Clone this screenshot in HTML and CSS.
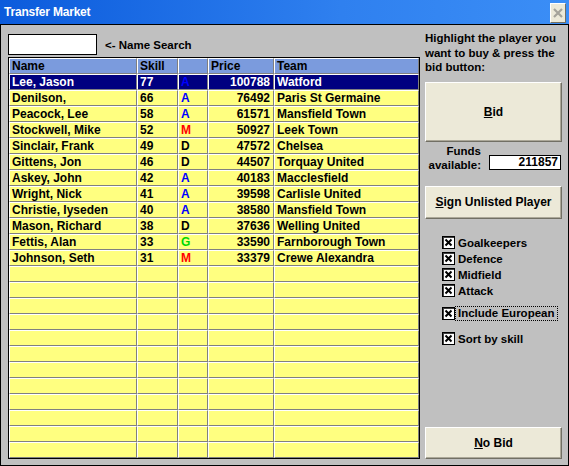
FILE: index.html
```html
<!DOCTYPE html>
<html>
<head>
<meta charset="utf-8">
<link rel="stylesheet" href="styles.css">
</head>
<body>
<div class="window">
  <div class="titlebar">
    <span class="title">Transfer Market</span>
    <span class="close"><svg width="10" height="10" viewBox="0 0 10 10"><path d="M1 1L9 9M9 1L1 9" stroke="#a5a39a" stroke-width="2.2"/></svg></span>
  </div>
  <div class="content">
    <div class="left">
      <div class="search-row">
        <div class="search-box"></div>
        <span class="search-label">&lt;- Name Search</span>
      </div>
      <div class="grid">
        <div class="row head"><div class="c">Name</div><div class="c">Skill</div><div class="c"></div><div class="c">Price</div><div class="c">Team</div></div>
        <div class="row sel"><div class="c">Lee, Jason</div><div class="c">77</div><div class="c pa">A</div><div class="c num">100788</div><div class="c">Watford</div></div>
        <div class="row"><div class="c">Denilson,</div><div class="c">66</div><div class="c pa">A</div><div class="c num">76492</div><div class="c">Paris St Germaine</div></div>
        <div class="row"><div class="c">Peacock, Lee</div><div class="c">58</div><div class="c pa">A</div><div class="c num">61571</div><div class="c">Mansfield Town</div></div>
        <div class="row"><div class="c">Stockwell, Mike</div><div class="c">52</div><div class="c pm">M</div><div class="c num">50927</div><div class="c">Leek Town</div></div>
        <div class="row"><div class="c">Sinclair, Frank</div><div class="c">49</div><div class="c pd">D</div><div class="c num">47572</div><div class="c">Chelsea</div></div>
        <div class="row"><div class="c">Gittens, Jon</div><div class="c">46</div><div class="c pd">D</div><div class="c num">44507</div><div class="c">Torquay United</div></div>
        <div class="row"><div class="c">Askey, John</div><div class="c">42</div><div class="c pa">A</div><div class="c num">40183</div><div class="c">Macclesfield</div></div>
        <div class="row"><div class="c">Wright, Nick</div><div class="c">41</div><div class="c pa">A</div><div class="c num">39598</div><div class="c">Carlisle United</div></div>
        <div class="row"><div class="c">Christie, Iyseden</div><div class="c">40</div><div class="c pa">A</div><div class="c num">38580</div><div class="c">Mansfield Town</div></div>
        <div class="row"><div class="c">Mason, Richard</div><div class="c">38</div><div class="c pd">D</div><div class="c num">37636</div><div class="c">Welling United</div></div>
        <div class="row"><div class="c">Fettis, Alan</div><div class="c">33</div><div class="c pg">G</div><div class="c num">33590</div><div class="c">Farnborough Town</div></div>
        <div class="row"><div class="c">Johnson, Seth</div><div class="c">31</div><div class="c pm">M</div><div class="c num">33379</div><div class="c">Crewe Alexandra</div></div>
        <div class="row"><div class="c"></div><div class="c"></div><div class="c"></div><div class="c"></div><div class="c"></div></div>
        <div class="row"><div class="c"></div><div class="c"></div><div class="c"></div><div class="c"></div><div class="c"></div></div>
        <div class="row"><div class="c"></div><div class="c"></div><div class="c"></div><div class="c"></div><div class="c"></div></div>
        <div class="row"><div class="c"></div><div class="c"></div><div class="c"></div><div class="c"></div><div class="c"></div></div>
        <div class="row"><div class="c"></div><div class="c"></div><div class="c"></div><div class="c"></div><div class="c"></div></div>
        <div class="row"><div class="c"></div><div class="c"></div><div class="c"></div><div class="c"></div><div class="c"></div></div>
        <div class="row"><div class="c"></div><div class="c"></div><div class="c"></div><div class="c"></div><div class="c"></div></div>
        <div class="row"><div class="c"></div><div class="c"></div><div class="c"></div><div class="c"></div><div class="c"></div></div>
        <div class="row"><div class="c"></div><div class="c"></div><div class="c"></div><div class="c"></div><div class="c"></div></div>
        <div class="row"><div class="c"></div><div class="c"></div><div class="c"></div><div class="c"></div><div class="c"></div></div>
        <div class="row"><div class="c"></div><div class="c"></div><div class="c"></div><div class="c"></div><div class="c"></div></div>
        <div class="row"><div class="c"></div><div class="c"></div><div class="c"></div><div class="c"></div><div class="c"></div></div>
      </div>
    </div>
    <div class="right">
      <div class="hint">Highlight the player you want to buy &amp; press the bid button:</div>
      <div class="btn bid"><span><u>B</u>id</span></div>
      <div class="funds">
        <div class="funds-label">Funds<br>available:</div>
        <div class="funds-box">211857</div>
      </div>
      <div class="btn sign"><span><u>S</u>ign Unlisted Player</span></div>
      <div class="checks">
        <div class="chk"><span class="box"><svg width="11" height="11" viewBox="0 0 11 11"><path d="M2.5 2.5L8.5 8.5M8.5 2.5L2.5 8.5" stroke="#000" stroke-width="2"/></svg></span><span>Goalkeepers</span></div>
        <div class="chk"><span class="box"><svg width="11" height="11" viewBox="0 0 11 11"><path d="M2.5 2.5L8.5 8.5M8.5 2.5L2.5 8.5" stroke="#000" stroke-width="2"/></svg></span><span>Defence</span></div>
        <div class="chk"><span class="box"><svg width="11" height="11" viewBox="0 0 11 11"><path d="M2.5 2.5L8.5 8.5M8.5 2.5L2.5 8.5" stroke="#000" stroke-width="2"/></svg></span><span>Midfield</span></div>
        <div class="chk"><span class="box"><svg width="11" height="11" viewBox="0 0 11 11"><path d="M2.5 2.5L8.5 8.5M8.5 2.5L2.5 8.5" stroke="#000" stroke-width="2"/></svg></span><span>Attack</span></div>
        <div class="chk euro"><span class="box"><svg width="11" height="11" viewBox="0 0 11 11"><path d="M2.5 2.5L8.5 8.5M8.5 2.5L2.5 8.5" stroke="#000" stroke-width="2"/></svg></span><span class="focus">Include European</span></div>
        <div class="chk sort"><span class="box"><svg width="11" height="11" viewBox="0 0 11 11"><path d="M2.5 2.5L8.5 8.5M8.5 2.5L2.5 8.5" stroke="#000" stroke-width="2"/></svg></span><span>Sort by skill</span></div>
      </div>
      <div class="btn nobid"><span><u>N</u>o Bid</span></div>
    </div>
  </div>
</div>
</body>
</html>
```
FILE: styles.css
```css
* { box-sizing: border-box; }
html, body { margin: 0; padding: 0; }
body {
  font-family: "Liberation Sans", Arial, sans-serif;
  font-weight: bold;
  font-size: 11.5px;
  color: #000;
  background: #c0c0c0;
}
.window {
  width: 569px;
  height: 466px;
  background: #c0c0c0;
  border: 1px solid #000;
  border-top: none;
  display: flex;
  flex-direction: column;
}
.titlebar {
  height: 26px;
  margin: 0 -1px;
  background: linear-gradient(to right, #0b5bdc, #2f80ef 60%, #3b8ef6);
  border-bottom: 1px solid #000;
  display: flex;
  align-items: center;
  justify-content: space-between;
  padding: 0 3px 0 4px;
}
.title {
  color: #fff;
  font-size: 12px;
  letter-spacing: -0.2px;
}
.close {
  width: 16px;
  height: 20px;
  background: #ece9d8;
  border-top: 1px solid #fff;
  border-left: 1px solid #fff;
  border-right: 1px solid #716f64;
  border-bottom: 1px solid #716f64;
  display: flex;
  align-items: center;
  justify-content: center;
  margin-top: 1px;
}
.content {
  flex: 1;
  display: flex;
  padding: 0 5px 6px 7px;
}
.left {
  width: 412px;
  display: flex;
  flex-direction: column;
  padding-top: 9px;
}
.search-row {
  display: flex;
  align-items: center;
  height: 21px;
  gap: 8px;
}
.search-box {
  width: 89px;
  height: 21px;
  background: #fff;
  border: 1px solid #000;
}
.search-label { font-size: 11.5px; }
.grid {
  margin-top: 2px;
  border: 1px solid #000;
  background: #ffff80;
}
.row {
  display: grid;
  grid-template-columns: 128px 41px 30px 66px 145px;
  height: 16px;
}
.c {
  height: 16px;
  border-top: 1px solid #fff;
  border-left: 1px solid #fff;
  border-bottom: 1px solid #808080;
  border-right: 1px solid #808080;
  line-height: 14px;
  padding: 0 2px;
  font-size: 12px;
  white-space: nowrap;
  overflow: hidden;
  background: #ffff80;
}
.row .c:first-child { padding-left: 2px; }
.head .c { background: #7b9bdd; }
.sel .c { background: #000080; color: #fff; }
.num { text-align: right; padding-right: 3px; }
.pa { color: #0000ff; }
.sel .pa { color: #0000ff; }
.pm { color: #ff0000; }
.pd { color: #000; }
.pg { color: #00d800; }
.right {
  width: 137px;
  margin-left: 5px;
  display: flex;
  flex-direction: column;
  padding-top: 6px;
}
.hint {
  line-height: 14.5px;
}
.btn {
  background: #ece9d8;
  border-top: 1px solid #fff;
  border-left: 1px solid #fff;
  border-right: 1px solid #716f64;
  border-bottom: 1px solid #716f64;
  box-shadow: inset -1px -1px 0 #aca899;
  display: flex;
  align-items: center;
  justify-content: center;
  font-size: 12px;
}
.bid { height: 60px; margin-top: 7px; }
.funds {
  display: flex;
  align-items: flex-end;
  margin-top: 2px;
  height: 28px;
}
.funds-label {
  width: 56px;
  text-align: right;
  line-height: 14px;
}
.funds-box {
  margin-left: 8px;
  margin-bottom: 2px;
  width: 72px;
  height: 15px;
  background: #fff;
  border: 1px solid #000;
  text-align: right;
  line-height: 13px;
  padding-right: 2px;
  font-size: 12px;
}
.sign { height: 33px; margin-top: 14px; }
.checks {
  margin-top: 16px;
  padding-left: 17px;
  display: flex;
  flex-direction: column;
}
.chk {
  display: flex;
  align-items: center;
  height: 16px;
  gap: 3px;
  white-space: nowrap;
}
.box {
  width: 13px;
  height: 13px;
  background: #fff;
  border: 1px solid #000;
  box-shadow: inset 1px 1px 0 #404040;
  display: flex;
  align-items: center;
  justify-content: center;
  flex: none;
}
.box svg { display: block; }
.euro { margin-top: 7px; gap: 0; }
.focus {
  border: 1px dotted #000;
  padding: 0 2px 0 2px;
  line-height: 13px;
}
.sort { margin-top: 9px; }
.nobid { height: 32px; margin-top: auto; }
```
